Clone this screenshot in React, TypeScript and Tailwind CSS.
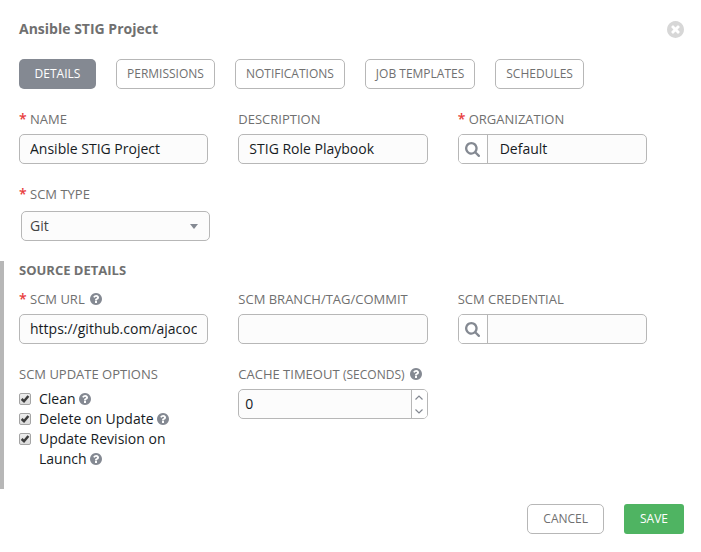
import { useState } from "react";
import type { InputHTMLAttributes, ReactNode } from "react";

const CIRCLE =
  "M1664 896q0 209-103 385.5t-279.5 279.5-385.5 103-385.5-103-279.5-279.5-103-385.5 103-385.5 279.5-279.5 385.5-103 385.5 103 279.5 279.5 103 385.5z";

function HelpIcon() {
  return (
    <button type="button" aria-label="Help" className="inline-block align-[-1px] text-[#848992]">
      <svg viewBox="128 128 1536 1536" className="block size-3" fill="currentColor" fillRule="evenodd" aria-hidden="true">
        <path
          d={
            "M1024 1376v-192q0-14-9-23t-23-9h-192q-14 0-23 9t-9 23v192q0 14 9 23t23 9h192q14 0 23-9t9-23zm256-672q0-88-55.5-163t-138.5-116-170-41q-243 0-371 213-15 24 8 42l132 100q7 6 19 6 16 0 25-12 53-68 86-92 34-24 86-24 48 0 85.5 26t37.5 59q0 38-20 61t-68 45q-63 28-115.5 86.5t-52.5 125.5v36q0 14 9 23t23 9h192q14 0 23-9t9-23q0-19 21.5-49.5t54.5-49.5q32-18 49-28.5t46-35 44.5-48 28-60.5 12.5-81z" +
            CIRCLE
          }
        />
      </svg>
    </button>
  );
}

function CloseIcon() {
  return (
    <svg viewBox="128 128 1536 1536" className="block size-[17px]" aria-hidden="true">
      <path fill="currentColor" d={CIRCLE} />
      <path
        fill="#fff"
        d="M1277 1122q0-26-19-45l-181-181 181-181q19-19 19-45 0-27-19-46l-90-90q-19-18-46-18-26 0-45 19l-181 181-181-181q-19-19-45-19-27 0-46 19l-90 90q-19 19-19 46 0 26 19 45l181 181-181 181q-19 19-19 45 0 27 19 46l90 90q19 18 46 18 26 0 45-19l181-181 181 181q19 19 45 19 27 0 46-19l90-90q19-19 19-46z"
      />
    </svg>
  );
}

function SearchIcon() {
  return (
    <svg viewBox="64 128 1664 1664" className="block size-[15px]" fill="currentColor" aria-hidden="true">
      <path d="M1216 832q0-185-131.5-316.5t-316.5-131.5-316.5 131.5-131.5 316.5 131.5 316.5 316.5 131.5 316.5-131.5 131.5-316.5zm512 832q0 52-38 90t-90 38q-54 0-90-38l-343-342q-179 124-399 124-143 0-273.5-55.5t-225-150-150-225-55.5-273.5 55.5-273.5 150-225 225-150 273.5-55.5 273.5 55.5 225 150 150 225 55.5 273.5q0 220-124 399l343 343q37 37 37 90z" />
    </svg>
  );
}

const inputClass =
  "block h-[30px] w-full min-w-0 rounded-[5px] border border-[#b7b7b7] bg-[#fcfcfc] px-2.5 pb-0.5 text-sm text-[#161b1f] outline-none";

interface FieldProps {
  id: string;
  label: ReactNode;
  required?: boolean;
  help?: boolean;
  children: ReactNode;
}

function Field({ id, label, required, help, children }: FieldProps) {
  return (
    <div className="flex min-w-0 flex-col gap-[5px]">
      <div className="flex h-5 items-center gap-[5px] whitespace-nowrap text-[13px] leading-5 text-[#707070]">
        <label htmlFor={id} className="flex items-center gap-[3px]">
          {required && <span className="w-2 text-sm leading-5 font-semibold text-[#e83c3c]">*</span>}
          <span>{label}</span>
        </label>
        {help && <HelpIcon />}
      </div>
      {children}
    </div>
  );
}

function LookupInput(props: InputHTMLAttributes<HTMLInputElement>) {
  return (
    <div className="flex h-[30px] overflow-hidden rounded-[5px] border border-[#b7b7b7] bg-[#fcfcfc]">
      <button
        type="button"
        aria-label="Search"
        className="flex w-[29px] shrink-0 items-center justify-center border-r border-[#b7b7b7] bg-white text-[#848992]"
      >
        <SearchIcon />
      </button>
      <input type="text" className="w-full min-w-0 bg-transparent px-3 text-sm text-[#161b1f] outline-none" {...props} />
    </div>
  );
}

function CheckOption({ id, label }: { id: string; label: string }) {
  return (
    <div className="flex gap-2">
      <span className="grid h-5 w-3 shrink-0 place-items-center">
        <input
          id={id}
          type="checkbox"
          defaultChecked
          className="peer col-start-1 row-start-1 size-3 appearance-none rounded-[2px] border border-[#a4a4a4] bg-linear-to-b from-[#ededed] to-[#dcdcdc]"
        />
        <svg
          viewBox="0 0 12 12"
          className="pointer-events-none invisible col-start-1 row-start-1 size-3 peer-checked:visible"
          aria-hidden="true"
        >
          <path d="M2.600 6 5 8.200 9.400 3" fill="none" stroke="#3d3d3d" strokeWidth="2.500" />
        </svg>
      </span>
      <span className="text-sm leading-5 text-[#161b1f]">
        <label htmlFor={id}>{label}</label> <HelpIcon />
      </span>
    </div>
  );
}

const tabs = ["DETAILS", "PERMISSIONS", "NOTIFICATIONS", "JOB TEMPLATES", "SCHEDULES"];

export default function App() {
  const [active, setActive] = useState("DETAILS");
  const [timeout, setTimeoutValue] = useState(0);

  return (
    <main className="min-h-screen bg-white pt-[19px] pb-[18px] font-['Open_Sans','Noto_Sans',sans-serif]">
      <header className="flex h-5 items-center justify-between pr-[17px] pl-[19px]">
        <h1 className="text-sm leading-5 font-bold text-[#707070]">Ansible STIG Project</h1>
        <button type="button" aria-label="Close" className="text-[#d7d7d7]">
          <CloseIcon />
        </button>
      </header>

      <nav className="mt-5 flex flex-wrap gap-5 px-[19px]">
        {tabs.map((tab) => (
          <button
            key={tab}
            type="button"
            onClick={() => setActive(tab)}
            className={
              tab === active
                ? "h-[30px] rounded-[5px] bg-[#848992] px-[15px] text-xs text-white min-w-[77px]"
                : "h-[30px] rounded-[5px] border border-[#b7b7b7] bg-white px-2.5 text-xs text-[#707070]"
            }
          >
            {tab}
          </button>
        ))}
      </nav>

      <form onSubmit={(e) => e.preventDefault()}>
        <div className="mt-5 grid grid-cols-3 gap-x-[30px] gap-y-5 pr-[54px] pl-[19px]">
          <Field id="name" label="NAME" required>
            <input id="name" type="text" defaultValue="Ansible STIG Project" className={inputClass} />
          </Field>
          <Field id="description" label="DESCRIPTION">
            <input id="description" type="text" defaultValue="STIG Role Playbook" className={inputClass} />
          </Field>
          <Field id="organization" label="ORGANIZATION" required>
            <LookupInput id="organization" defaultValue="Default" />
          </Field>
          <Field id="scm-type" label="SCM TYPE" required>
            <div className="mt-0.5 ml-0.5 -mr-0.5 grid items-center">
              <select
                id="scm-type"
                defaultValue="Git"
                className="col-start-1 row-start-1 h-[30px] w-full appearance-none rounded-[5px] border border-[#b7b7b7] bg-[#fcfcfc] px-2 text-sm text-[#444] outline-none"
              >
                <option>Manual</option>
                <option>Git</option>
                <option>Mercurial</option>
                <option>Subversion</option>
              </select>
              <svg
                viewBox="0 0 8 5"
                className="pointer-events-none col-start-1 row-start-1 mr-3 h-[5px] w-2 justify-self-end"
                aria-hidden="true"
              >
                <path d="M0 0h8L4 5z" fill="#848992" />
              </svg>
            </div>
          </Field>
        </div>

        <section className="mt-5 border-l-4 border-[#b7b7b7] pr-[54px] pb-5 pl-[15px]">
          <h2 className="text-[13px] leading-[18px] font-bold text-[#707070]">SOURCE DETAILS</h2>
          <div className="mt-2.5 grid grid-cols-3 gap-x-[30px] gap-y-5">
            <Field id="scm-url" label="SCM URL" required help>
              <input id="scm-url" type="text" defaultValue="https://github.com/ajacocks/stig" className={inputClass} />
            </Field>
            <Field id="scm-branch" label="SCM BRANCH/TAG/COMMIT">
              <input id="scm-branch" type="text" className={inputClass} />
            </Field>
            <Field id="scm-credential" label="SCM CREDENTIAL">
              <LookupInput id="scm-credential" />
            </Field>
            <fieldset className="min-w-0">
              <legend className="mb-[5px] text-[13px] leading-5 text-[#707070]">SCM UPDATE OPTIONS</legend>
              <CheckOption id="clean" label="Clean" />
              <CheckOption id="delete-on-update" label="Delete on Update" />
              <CheckOption id="update-on-launch" label="Update Revision on Launch" />
            </fieldset>
            <Field
              id="cache-timeout"
              help
              label={
                <>
                  CACHE TIMEOUT <span className="text-xs">(SECONDS)</span>
                </>
              }
            >
              <div className="flex h-[30px] overflow-hidden rounded-[5px] border border-[#b7b7b7] bg-[#fcfcfc]">
                <input
                  id="cache-timeout"
                  type="text"
                  inputMode="numeric"
                  value={timeout}
                  onChange={(e) => setTimeoutValue(Number(e.target.value) || 0)}
                  className="w-full min-w-0 bg-transparent px-1.5 text-sm text-[#161b1f] outline-none"
                />
                <div className="flex w-4 shrink-0 flex-col border-l border-[#b7b7b7] bg-white text-[#848992]">
                  <button
                    type="button"
                    aria-label="Increase"
                    onClick={() => setTimeoutValue(timeout + 1)}
                    className="flex flex-1 items-center justify-center"
                  >
                    <svg viewBox="0 0 8 5" className="h-[5px] w-2" aria-hidden="true">
                      <path d="M.5 4.5 4 1l3.500 3.500" fill="none" stroke="currentColor" strokeWidth="1.200" />
                    </svg>
                  </button>
                  <button
                    type="button"
                    aria-label="Decrease"
                    onClick={() => setTimeoutValue(Math.max(0, timeout - 1))}
                    className="flex flex-1 items-center justify-center"
                  >
                    <svg viewBox="0 0 8 5" className="h-[5px] w-2" aria-hidden="true">
                      <path d="M.5.5 4 4 7.500.5" fill="none" stroke="currentColor" strokeWidth="1.200" />
                    </svg>
                  </button>
                </div>
              </div>
            </Field>
          </div>
        </section>

        <footer className="mt-[15px] flex justify-end gap-5 pr-[17px]">
          <button
            type="button"
            className="h-[30px] rounded-[5px] border border-[#b7b7b7] bg-white px-[15px] text-xs text-[#707070]"
          >
            CANCEL
          </button>
          <button type="submit" className="h-[30px] rounded-[3px] bg-[#4fb462] px-4 text-xs text-white">
            SAVE
          </button>
        </footer>
      </form>
    </main>
  );
}
